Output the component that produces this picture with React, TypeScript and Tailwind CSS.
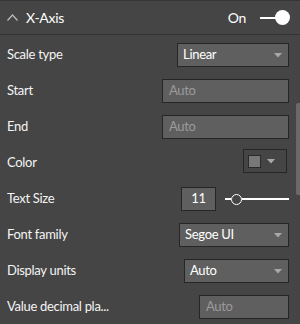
import React from "react";

const Caret = () => (
  <svg width="8" height="5" viewBox="0 0 8 5" className="block">
    <polygon points="0,0 8,0 4,4.5" fill="#a8a8a8" />
  </svg>
);

function Dropdown({ w, value }: { w: string; value: string }) {
  return (
    <div
      className={`${w} h-[24px] flex items-center justify-between bg-[#5f5f5f] border border-[#262626] pl-[5px] pr-[6px] text-[13px] text-white`}
    >
      <span>{value}</span>
      <Caret />
    </div>
  );
}

function Input({ w }: { w: string }) {
  return (
    <div
      className={`${w} h-[24px] flex items-center bg-[#5f5f5f] border border-[#262626] pl-[6px] text-[13px] text-[#9b9b9b]`}
    >
      Auto
    </div>
  );
}

function Row({ label, children }: { label: string; children: React.ReactNode }) {
  return (
    <div className="h-[36px] flex items-center justify-between pl-[7px] pr-[11px]">
      <span className="text-[13px] text-[#f4f4f4]">{label}</span>
      {children}
    </div>
  );
}

export default function App() {
  return (
    <div
      className="relative w-[300px] h-[324px] overflow-hidden bg-[#454545] border-t border-[#353535] tracking-[-0.3px]"
      style={{ fontFamily: 'Lato, "Noto Sans", sans-serif' }}
    >
      <div className="h-[34px] flex items-center justify-between pl-[7px] pr-[10px] border-b border-[#333333]">
        <div className="flex items-center gap-[8px]">
          <svg width="11" height="7" viewBox="0 0 11 7" className="block">
            <polyline points="0.5,6.5 5.5,1 10.5,6.5" fill="none" stroke="#bdbdbd" strokeWidth="1.2" />
          </svg>
          <span className="text-[14px] text-white">X-Axis</span>
        </div>
        <div className="flex items-center gap-[14px]">
          <span className="text-[14px] text-white">On</span>
          <div className="flex items-center">
            <div className="w-[18px] h-[2px] bg-white" />
            <div className="w-[15px] h-[15px] rounded-full bg-white -ml-[3px]" />
          </div>
        </div>
      </div>
      <div className="pt-[2px]">
        <Row label="Scale type">
          <Dropdown w="w-[112px]" value="Linear" />
        </Row>
        <Row label="Start">
          <Input w="w-[127px]" />
        </Row>
        <Row label="End">
          <Input w="w-[127px]" />
        </Row>
        <Row label="Color">
          <div className="w-[44px] h-[24px] -mt-[4px] mr-[2px] flex items-center border border-[#262626] pl-[4px] gap-[6px]">
            <div className="w-[13px] h-[13px] bg-[#787878] border border-[#2a2a2a]" />
            <Caret />
          </div>
        </Row>
        <Row label="Text Size">
          <div className="flex items-center gap-[9px]">
            <div className="w-[35px] h-[24px] flex items-center justify-center bg-[#5f5f5f] border border-[#262626] text-[13px] text-white">
              11
            </div>
            <div className="flex items-center w-[64px]">
              <div className="w-[6px] h-[1.5px] bg-white" />
              <div className="w-[11px] h-[11px] rounded-full border-[1.5px] border-white bg-[#454545]" />
              <div className="flex-1 h-[1.5px] bg-white" />
            </div>
          </div>
        </Row>
        <Row label="Font family">
          <Dropdown w="w-[110px]" value="Segoe UI" />
        </Row>
        <Row label="Display units">
          <Dropdown w="w-[105px]" value="Auto" />
        </Row>
        <Row label="Value decimal pla...">
          <Input w="w-[90px]" />
        </Row>
      </div>
      <div className="absolute right-0 top-[102px] w-[4px] h-[92px] rounded-l-[2px] bg-[#6a6a6a]" />
    </div>
  );
}
